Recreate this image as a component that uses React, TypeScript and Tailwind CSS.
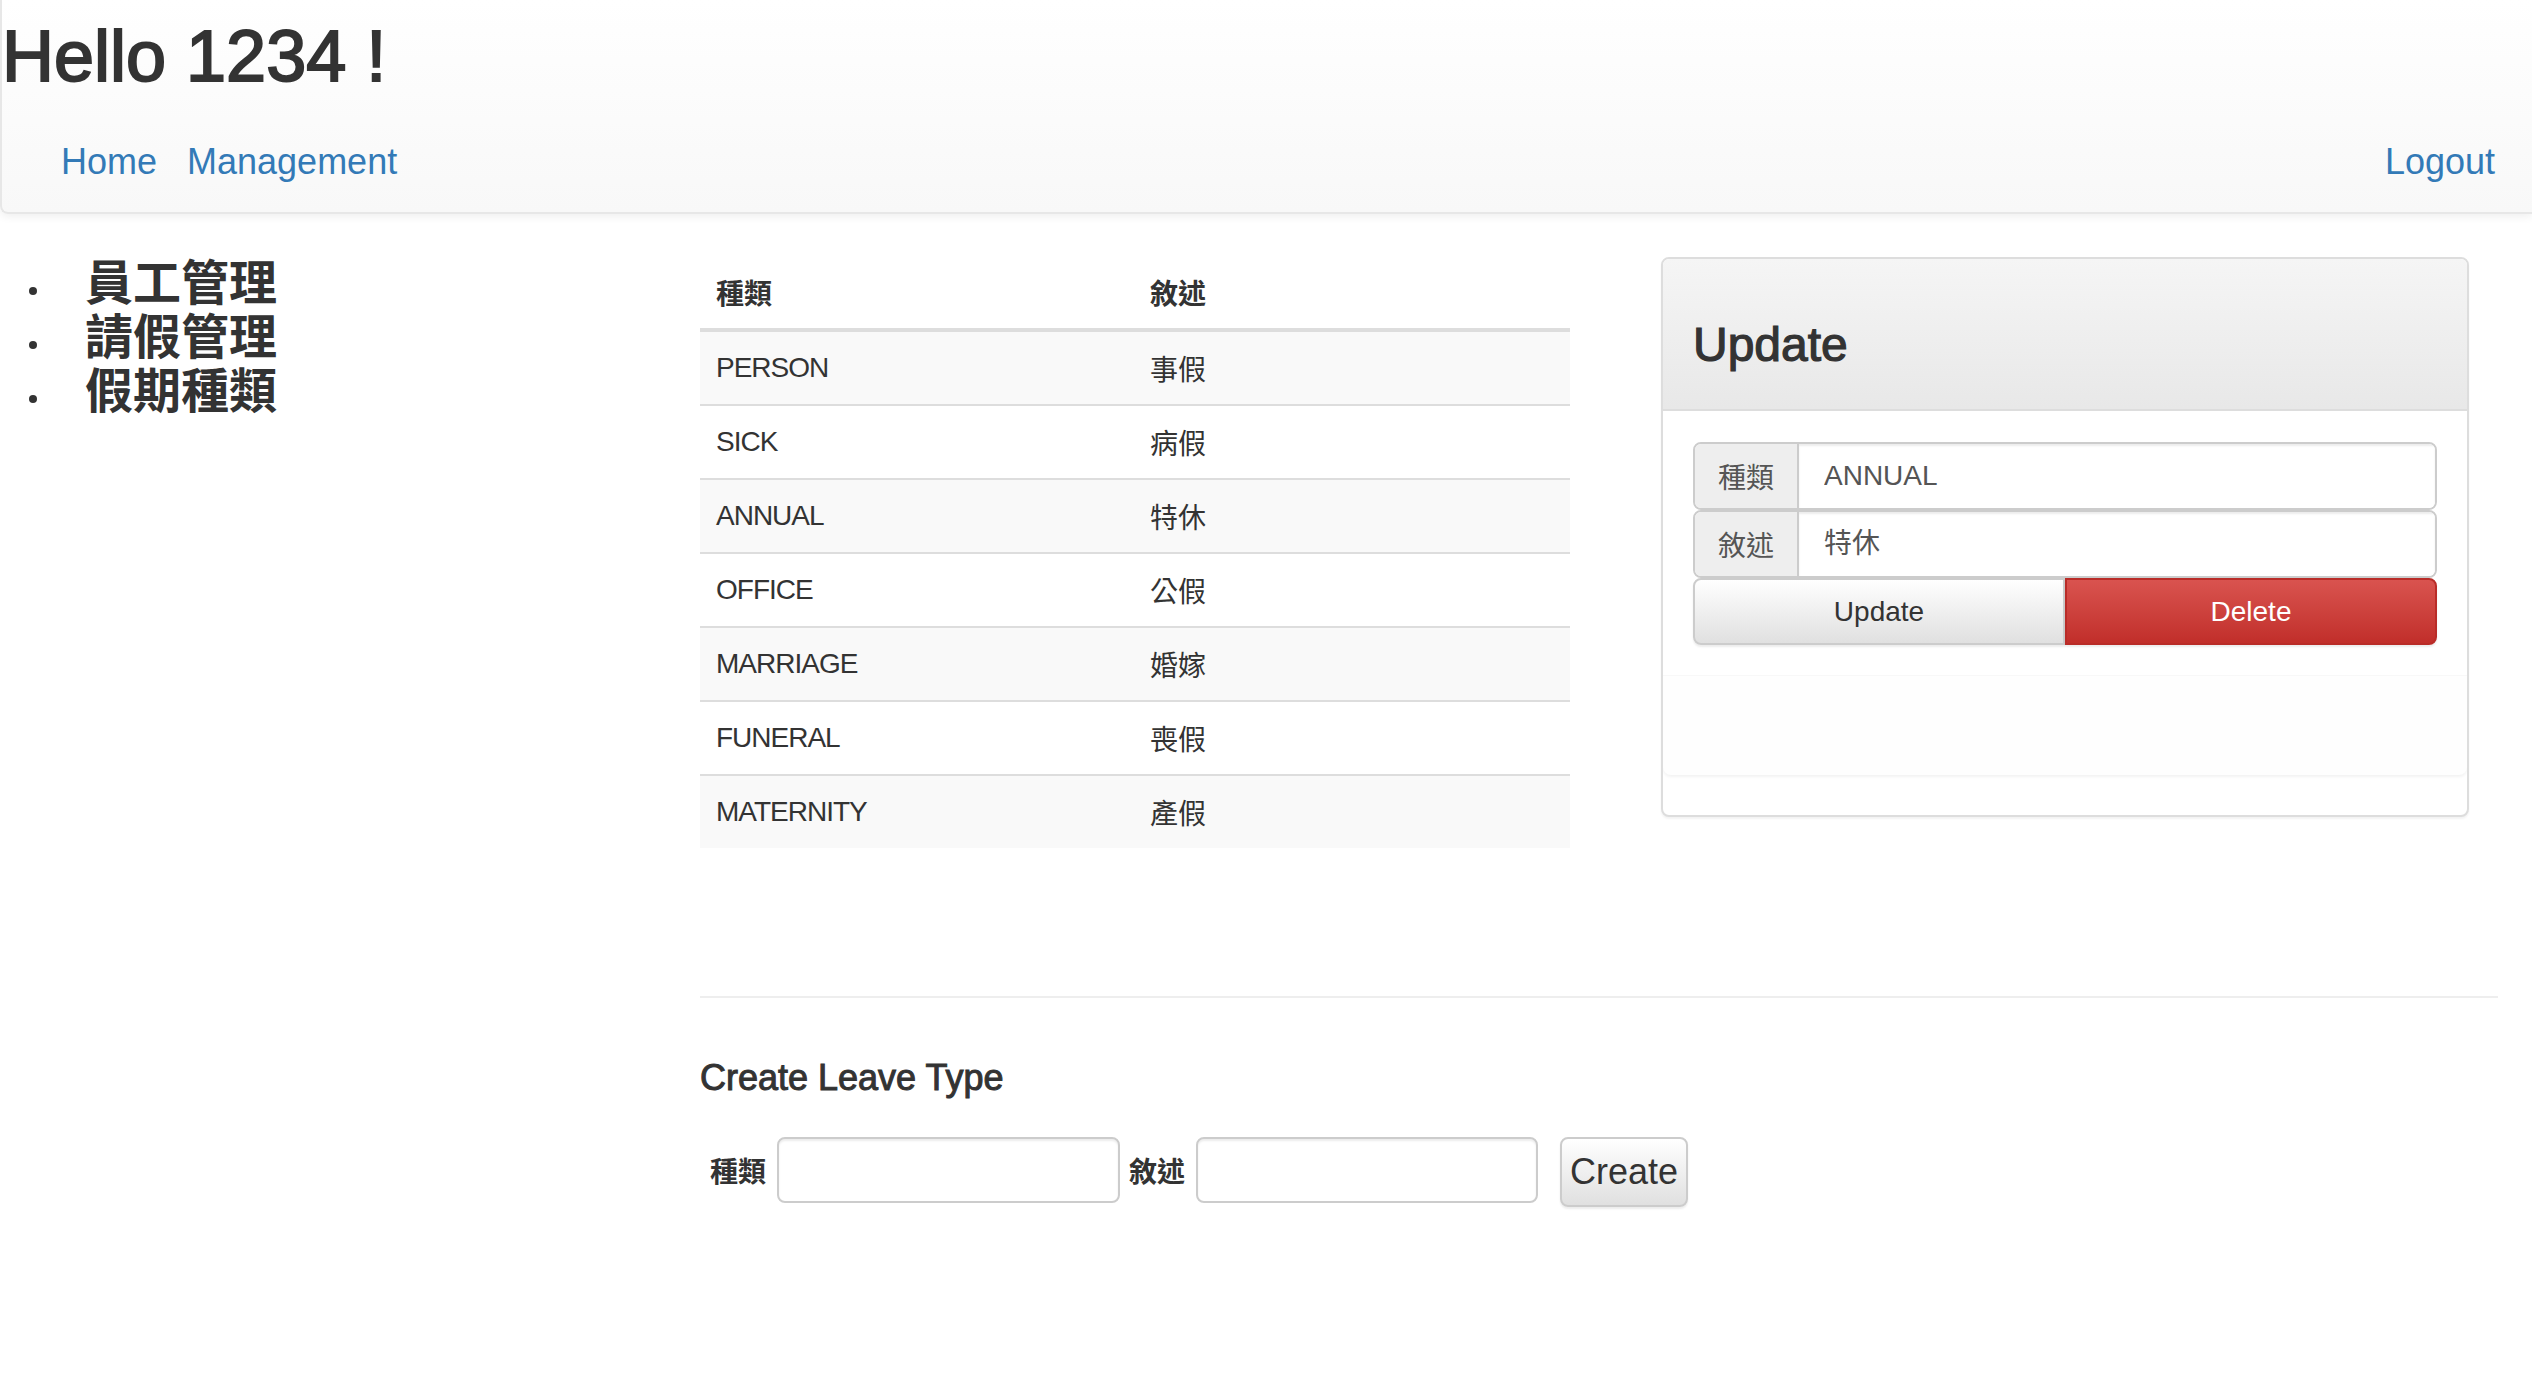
const latin = "font-['Liberation_Sans','Noto_Sans_CJK_TC',sans-serif]"
const cjk = "font-['Noto_Sans_CJK_TC',sans-serif]"

const leaveTypes = [
  { code: "PERSON", name: "事假" },
  { code: "SICK", name: "病假" },
  { code: "ANNUAL", name: "特休" },
  { code: "OFFICE", name: "公假" },
  { code: "MARRIAGE", name: "婚嫁" },
  { code: "FUNERAL", name: "喪假" },
  { code: "MATERNITY", name: "產假" },
]

const menu = ["員工管理", "請假管理", "假期種類"]

function Navbar() {
  return (
    <header className="h-[214px] border-l-2 border-b-2 border-[#e7e7e7] rounded-bl-lg bg-gradient-to-b from-white to-[#f8f8f8] shadow-[0_2px_10px_rgba(0,0,0,0.075)]">
      <h1 className={`${latin} pt-[20px] text-[72px] leading-[72px] text-[#333] [-webkit-text-stroke:2px_#333]`}>Hello 1234 !</h1>
      <nav className="mt-[52px] flex items-center pr-[37px]">
        <div className="ml-[59px] flex gap-[30px]">
          <a className={`${latin} text-[36px] leading-[36px] text-[#337ab7]`}>Home</a>
          <a className={`${latin} text-[36px] leading-[36px] text-[#337ab7]`}>Management</a>
        </div>
        <a className={`${latin} ml-auto text-[36px] leading-[36px] text-[#337ab7]`}>Logout</a>
      </nav>
    </header>
  )
}

function Sidebar() {
  return (
    <aside className="w-[700px] shrink-0 pt-[38px]">
      <ul>
        {menu.map((item) => (
          <li key={item} className="flex h-[54px]">
            <span className="mt-[35px] ml-[29px] h-[8px] w-[8px] rounded-full bg-[#333]" />
            <span className={`${cjk} ml-[48px] text-[48px] leading-[54px] font-bold text-[#333]`}>{item}</span>
          </li>
        ))}
      </ul>
    </aside>
  )
}

function LeaveTable() {
  return (
    <div className="w-[870px] shrink-0 text-[#333]">
      <div className="flex h-[76px] items-center border-b-4 border-[#ddd]">
        <div className={`${cjk} w-[434px] pl-[16px] text-[28px] font-bold`}>種類</div>
        <div className={`${cjk} pl-[16px] text-[28px] font-bold`}>敘述</div>
      </div>
      {leaveTypes.map((t, i) => (
        <div
          key={t.code}
          className={
            i === 0
              ? "flex h-[72px] items-center bg-[#f9f9f9]"
              : i % 2 === 0
                ? "flex h-[74px] items-center border-t-2 border-[#ddd] bg-[#f9f9f9]"
                : "flex h-[74px] items-center border-t-2 border-[#ddd] bg-white"
          }
        >
          <div className={`${latin} w-[434px] pl-[16px] text-[28px] tracking-[-1px]`}>{t.code}</div>
          <div className={`${cjk} pl-[16px] text-[28px]`}>{t.name}</div>
        </div>
      ))}
    </div>
  )
}

function InputGroup({ label, value, h }: { label: string; value: string; h: string }) {
  return (
    <div className={`flex ${h} rounded-lg border-2 border-[#ccc] overflow-hidden`}>
      <div className={`${cjk} flex w-[104px] shrink-0 items-center justify-center border-r-2 border-[#ccc] bg-[#eee] text-[28px] text-[#555]`}>
        {label}
      </div>
      <input
        defaultValue={value}
        className={`${latin} min-w-0 flex-1 bg-white px-[25px] text-[28px] text-[#555] outline-none shadow-[inset_0_2px_2px_rgba(0,0,0,0.075)]`}
      />
    </div>
  )
}

function UpdatePanel() {
  return (
    <section className="mt-[1px] ml-[91px] w-[808px] shrink-0 rounded-lg border-2 border-[#ddd] bg-white shadow-[0_2px_2px_rgba(0,0,0,0.05)] overflow-hidden">
      <div className="h-[152px] border-b-2 border-[#ddd] bg-gradient-to-b from-[#f5f5f5] to-[#e8e8e8] px-[30px] pt-[62px]">
        <h3 className={`${latin} text-[48px] leading-[48px] font-medium text-[#333] [-webkit-text-stroke:1.2px_#333]`}>Update</h3>
      </div>
      <div className="px-[30px] pt-[31px] pb-[30px]">
        <InputGroup label="種類" value="ANNUAL" h="h-[68px]" />
        <InputGroup label="敘述" value="特休" h="h-[68px]" />
        <div className="flex h-[67px]">
          <button className={`${latin} flex-1 rounded-l-lg border-2 border-[#ccc] bg-gradient-to-b from-white to-[#e0e0e0] text-[28px] text-[#333] shadow-[0_2px_2px_rgba(0,0,0,0.075)]`}>
            Update
          </button>
          <button className={`${latin} flex-1 rounded-r-lg border-2 border-[#b92c28] bg-gradient-to-b from-[#d9534f] to-[#c12e2a] text-[28px] text-white shadow-[0_2px_2px_rgba(0,0,0,0.075)]`}>
            Delete
          </button>
        </div>
      </div>
      <div className="h-[100px] rounded-b-lg border-t border-[#f8f8f8] bg-[#fefefe] shadow-[0_2px_3px_rgba(0,0,0,0.05)]" />
      <div className="h-[40px]" />
    </section>
  )
}

function CreateForm() {
  return (
    <div>
      <h4 className={`${latin} mt-[60px] text-[36px] leading-[40px] font-medium text-[#333] [-webkit-text-stroke:1px_#333]`}>Create Leave Type</h4>
      <form className="mt-[39px] flex items-start" onSubmit={(e) => e.preventDefault()}>
        <label className={`${cjk} ml-[10px] flex h-[66px] items-center text-[28px] font-bold text-[#333]`}>種類</label>
        <input className="ml-[11px] h-[66px] w-[343px] rounded-lg border-2 border-[#ccc] bg-white shadow-[inset_0_2px_2px_rgba(0,0,0,0.075)] outline-none" />
        <label className={`${cjk} ml-[9px] flex h-[66px] items-center text-[28px] font-bold text-[#333]`}>敘述</label>
        <input className="ml-[11px] h-[66px] w-[342px] rounded-lg border-2 border-[#ccc] bg-white shadow-[inset_0_2px_2px_rgba(0,0,0,0.075)] outline-none" />
        <button className={`${latin} ml-[22px] h-[70px] w-[128px] rounded-lg border-2 border-[#ccc] bg-gradient-to-b from-white to-[#e0e0e0] text-[36px] text-[#333] shadow-[0_2px_2px_rgba(0,0,0,0.075)]`}>
          Create
        </button>
      </form>
    </div>
  )
}

export default function App() {
  return (
    <div className="min-h-screen bg-white">
      <Navbar />
      <div className="flex">
        <Sidebar />
        <main className="flex-1 pt-[42px] pr-[34px]">
          <div className="flex items-start">
            <LeaveTable />
            <UpdatePanel />
          </div>
          <div className="mt-[148px] h-[2px] bg-[#eee]" />
          <CreateForm />
        </main>
      </div>
    </div>
  )
}
